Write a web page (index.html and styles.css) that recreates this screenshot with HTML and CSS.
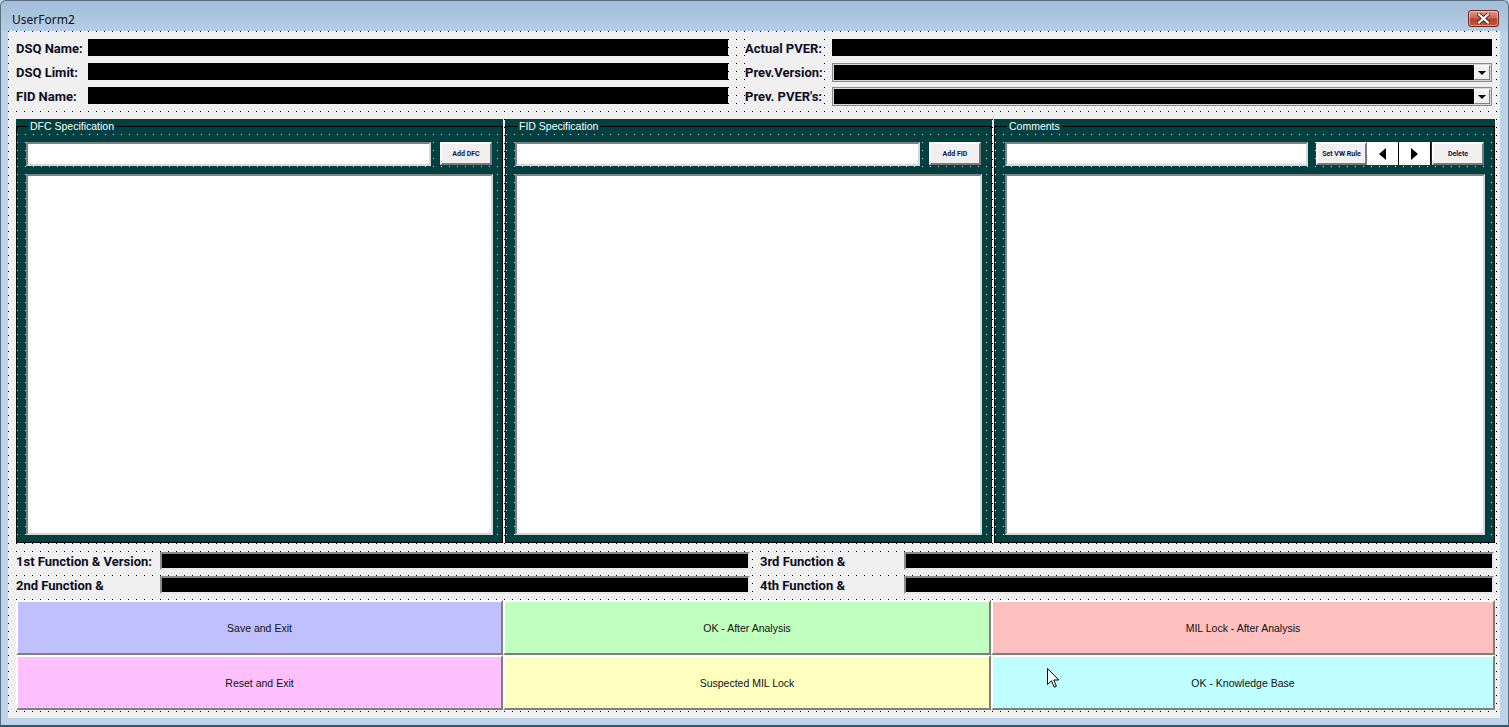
FILE: index.html
```html
<!DOCTYPE html>
<html lang="en">
  <head>
    <meta charset="UTF-8" />
    <title>UserForm2</title>
    <link rel="stylesheet" href="styles.css">
  </head>
  <body>
    <div class="window">
      <div class="titlebar">
        <span class="title">UserForm2</span>
        <button class="close" type="button" aria-label="Close">
          <svg width="13" height="11" viewBox="0 0 13 11">
            <path d="M2 1.5 L11 9.5 M11 1.5 L2 9.5" stroke="#4a2520" stroke-width="4" stroke-linecap="square" />
            <path d="M2 1.5 L11 9.5 M11 1.5 L2 9.5" stroke="#fff" stroke-width="2.2" stroke-linecap="square" />
          </svg>
        </button>
      </div>

      <div class="client">
        <!-- header fields -->
        <div class="head">
          <div class="head-col head-left">
            <div class="row"><span class="lbl lbl-top">DSQ Name:</span><span class="field field-top"></span></div>
            <div class="row"><span class="lbl lbl-top">DSQ Limit:</span><span class="field field-top"></span></div>
            <div class="row"><span class="lbl lbl-top">FID Name:</span><span class="field field-top"></span></div>
          </div>
          <div class="head-col head-right">
            <div class="row"><span class="lbl lbl-right">Actual PVER:</span><span class="field field-right"></span></div>
            <div class="row">
              <span class="lbl lbl-right">Prev.Version:</span>
              <span class="combo"><span class="combo-btn"><span class="caret"></span></span></span>
            </div>
            <div class="row">
              <span class="lbl lbl-right">Prev. PVER's:</span>
              <span class="combo"><span class="combo-btn"><span class="caret"></span></span></span>
            </div>
          </div>
        </div>

        <!-- the three frames -->
        <div class="frames">
          <div class="frame frame-narrow">
            <fieldset>
              <legend>DFC Specification</legend>
              <div class="entry">
                <span class="textbox"></span>
                <button class="small-btn" type="button">Add DFC</button>
              </div>
              <div class="listbox"></div>
            </fieldset>
          </div>
          <div class="frame frame-narrow">
            <fieldset>
              <legend>FID Specification</legend>
              <div class="entry">
                <span class="textbox"></span>
                <button class="small-btn" type="button">Add FID</button>
              </div>
              <div class="listbox"></div>
            </fieldset>
          </div>
          <div class="frame frame-wide">
            <fieldset>
              <legend>Comments</legend>
              <div class="entry">
                <span class="textbox textbox-short"></span>
                <button class="small-btn small-btn-rule" type="button">Set VW Rule</button>
                <button class="arrow-btn" type="button" aria-label="Previous"><span class="tri-left"></span></button>
                <button class="arrow-btn" type="button" aria-label="Next"><span class="tri-right"></span></button>
                <button class="small-btn small-btn-del" type="button">Delete</button>
              </div>
              <div class="listbox"></div>
            </fieldset>
          </div>
        </div>

        <!-- function fields -->
        <div class="funcs">
          <div class="row">
            <span class="lbl lbl-func">1st Function &amp; Version:</span><span class="field field-func"></span>
            <span class="lbl lbl-func lbl-func-right">3rd Function &amp;</span><span class="field field-func"></span>
          </div>
          <div class="row">
            <span class="lbl lbl-func">2nd Function &amp;</span><span class="field field-func"></span>
            <span class="lbl lbl-func lbl-func-right">4th Function &amp;</span><span class="field field-func"></span>
          </div>
        </div>

        <!-- action buttons -->
        <div class="actions">
          <button class="act act-blue" type="button">Save and Exit</button>
          <button class="act act-green" type="button">OK - After Analysis</button>
          <button class="act act-red" type="button">MIL Lock - After Analysis</button>
          <button class="act act-pink" type="button">Reset and Exit</button>
          <button class="act act-yellow" type="button">Suspected MIL Lock</button>
          <button class="act act-cyan" type="button">OK - Knowledge Base</button>
        </div>
      </div>

      <svg class="cursor" width="13" height="21" viewBox="0 0 13 21">
        <path d="M0.5 0.5 L0.5 16.5 L4.5 12.8 L7.2 19.2 L9.4 18.3 L6.8 12 L11.8 12 Z" fill="#fff" stroke="#000" stroke-width="1" stroke-linejoin="miter" />
      </svg>
    </div>
  </body>
</html>
```

FILE: styles.css
```css
html, body {
  margin: 0;
  padding: 0;
}
body {
  width: 1509px;
  height: 727px;
  overflow: hidden;
  background: #bcd3eb;
  font-family: "Liberation Sans", Arial, sans-serif;
}
button {
  font-family: inherit;
  margin: 0;
  padding: 0;
  cursor: default;
}

/* window chrome */
.window {
  position: relative;
  box-sizing: border-box;
  width: 1509px;
  height: 727px;
  border: 1px solid #5a6f80;
  border-bottom: 2px solid #2f5866;
  border-radius: 6px 6px 0 0;
  background: linear-gradient(#a3bdd8 0, #b6cde6 30px, #bcd3eb 31px, #bcd3eb 100%);
}
.titlebar {
  height: 30px;
  display: flex;
  align-items: flex-start;
  justify-content: space-between;
  padding: 0 9px 0 11px;
}
.title {
  font-family: "Noto Sans", "Open Sans", sans-serif;
  font-size: 12px;
  line-height: 14px;
  margin-top: 12px;
  color: #111;
}
.close {
  width: 31px;
  height: 17px;
  margin-top: 9px;
  border: 1px solid #6b2a22;
  border-radius: 3px;
  background: linear-gradient(#e09a8c 0, #d06552 45%, #b8402c 55%, #c8563e 100%);
  box-shadow: inset 0 0 0 1px rgba(255, 220, 210, 0.5);
  display: flex;
  align-items: center;
  justify-content: center;
}
.close svg {
  display: block;
}

/* form client area with the design grid */
.client {
  box-sizing: border-box;
  height: 687px;
  margin: 0 8px 0 7px;
  padding: 8px 0 8px 8px;
  background:
    linear-gradient(to right, transparent 1px, #f0f0f0 1px) 0 0 / 8px 8px,
    linear-gradient(to bottom, transparent 1px, #f0f0f0 1px) 0 0 / 8px 8px,
    #000;
}

.row {
  display: flex;
  height: 18px;
}
.lbl {
  display: block;
  height: 18px;
  line-height: 20px;
  background: #f0f0f0;
  font-family: Roboto, "Liberation Sans", sans-serif;
  font-weight: bold;
  font-size: 13px;
  color: #0c0c24;
  white-space: nowrap;
  overflow: hidden;
}
.field {
  display: block;
  height: 18px;
  background: #000;
}

/* header */
.head {
  display: flex;
}
.head-col {
  display: flex;
  flex-direction: column;
  gap: 6px;
}
.lbl-top {
  width: 72px;
}
.field-top {
  width: 640px;
  height: 17px;
}
.head-right {
  margin-left: 17px;
}
.lbl-right {
  width: 79px;
  margin-right: 8px;
}
.field-right {
  width: 660px;
  height: 17px;
}
.combo {
  box-sizing: border-box;
  width: 660px;
  height: 19px;
  background: #000;
  border: 1px solid #8a8a8a;
  box-shadow: inset 0 0 0 1px #d8d8d8;
  display: flex;
  justify-content: flex-end;
  padding: 1px;
}
.combo-btn {
  box-sizing: border-box;
  width: 16px;
  height: 15px;
  background: #f0f0f0;
  border: 1px solid;
  border-color: #fff #808080 #808080 #fff;
  display: flex;
  align-items: center;
  justify-content: center;
}
.caret {
  width: 0;
  height: 0;
  border-left: 4px solid transparent;
  border-right: 4px solid transparent;
  border-top: 4px solid #000;
  margin-top: 1px;
}

/* frames */
.frames {
  display: flex;
  gap: 2px;
  margin-top: 14px;
}
.frame {
  background:
    linear-gradient(to right, transparent 1px, #004040 1px) 1px 7px / 8px 8px,
    linear-gradient(to bottom, transparent 1px, #004040 1px) 1px 7px / 8px 8px,
    #fff;
}
.frame-narrow {
  width: 487px;
}
.frame-wide {
  width: 501px;
}
.frame fieldset {
  box-sizing: border-box;
  height: 424px;
  margin: 0;
  padding: 9px 9px 7px 9px;
  border: 1px solid #000;
  min-width: 0;
}
.frame-wide fieldset {
  padding-left: 10px;
}
.frame legend {
  height: 14px;
  line-height: 14px;
  padding: 0 2px;
  margin-left: 2px;
  font-size: 10.5px;
  color: #fff;
  background: #004040;
}
.entry {
  display: flex;
  height: 24px;
}
.textbox {
  box-sizing: border-box;
  display: block;
  width: 405px;
  height: 24px;
  background: #fff;
  border: 2px solid;
  border-color: #808080 #d8d8d8 #d8d8d8 #808080;
}
.textbox-short {
  width: 303px;
}
.small-btn {
  box-sizing: border-box;
  width: 52px;
  height: 23px;
  margin-left: 9px;
  background: #f0f0f0;
  border: 2px solid;
  border-color: #fff #7a7a7a #7a7a7a #fff;
  font-family: Roboto, "Liberation Sans", sans-serif;
  font-weight: bold;
  font-size: 7px;
  color: #14143c;
}
.small-btn-rule {
  width: 51px;
  margin-left: 8px;
}
.small-btn-del {
  margin-left: 1px;
}
.arrow-btn {
  box-sizing: border-box;
  width: 32px;
  height: 23px;
  background: #fff;
  border: none;
  border-right: 1px solid #000;
  display: flex;
  align-items: center;
  justify-content: center;
}
.tri-left,
.tri-right {
  width: 0;
  height: 0;
  border-top: 6px solid transparent;
  border-bottom: 6px solid transparent;
}
.tri-left {
  border-right: 7px solid #000;
}
.tri-right {
  border-left: 7px solid #000;
}
.listbox {
  box-sizing: border-box;
  height: 361px;
  margin-top: 8px;
  background: #fff;
  border: 2px solid;
  border-color: #808080 #d8d8d8 #d8d8d8 #808080;
}

/* function fields */
.funcs {
  display: flex;
  flex-direction: column;
  gap: 6px;
  margin-top: 9px;
}
.lbl-func {
  width: 138px;
  margin-right: 6px;
}
.lbl-func-right {
  margin-left: 10px;
}
.field-func {
  box-sizing: border-box;
  width: 590px;
  border: 2px solid;
  border-color: #8a8a8a #e8e8e8 #e8e8e8 #8a8a8a;
}

/* action buttons */
.actions {
  display: grid;
  grid-template-columns: 487px 488px 504px;
  grid-template-rows: 55px 55px;
  margin-top: 6px;
}
.act {
  box-sizing: border-box;
  border: 2px solid;
  border-color: #fff #7f7f7f #7f7f7f #fff;
  font-size: 10.5px;
  color: #111;
}
.act-blue { background: #c0c0ff; }
.act-green { background: #c0ffc0; }
.act-red { background: #ffc0c0; }
.act-pink { background: #ffc0ff; }
.act-yellow { background: #ffffc0; }
.act-cyan { background: #c0ffff; }

/* mouse pointer lying over the form */
.cursor {
  position: absolute;
  left: 1046px;
  top: 667px;
}
```
